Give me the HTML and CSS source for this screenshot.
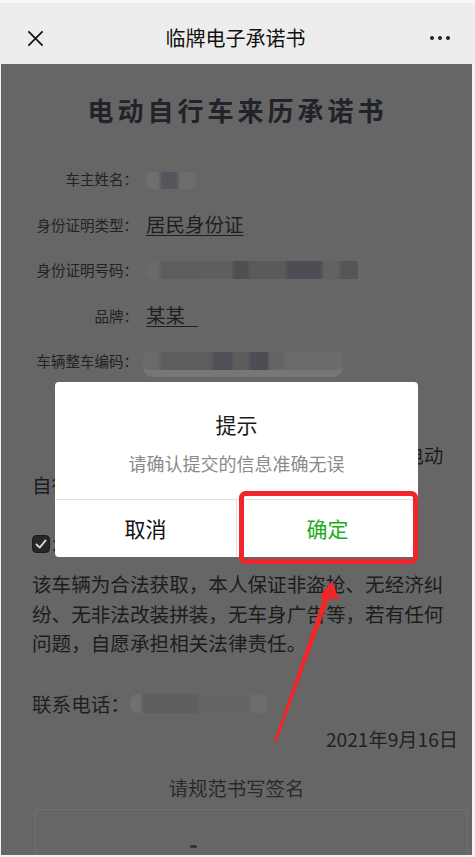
FILE: index.html
```html
<!DOCTYPE html>
<html lang="zh-CN">
<head>
    <meta charset="UTF-8">
    <meta name="viewport" content="width=device-width, initial-scale=1.0">
    <title>临牌电子承诺书</title>
    <link rel="stylesheet" href="styles.css">
</head>
<body>
    <div class="nav">
        <svg class="nav-close" viewBox="0 0 18 18"><path d="M1.5 1.5L16.5 16.5M16.5 1.5L1.5 16.5"/></svg>
        <div class="nav-title">临牌电子承诺书</div>
        <div class="nav-more"><i></i><i></i><i></i></div>
    </div>

    <div class="page">
        <h1 class="doc-title">电动自行车来历承诺书</h1>

        <div class="form">
            <div class="row">
                <span class="label">车主姓名：</span>
                <span class="blur blur-name"></span>
            </div>
            <div class="row">
                <span class="label">身份证明类型：</span>
                <span class="value">居民身份证</span>
            </div>
            <div class="row">
                <span class="label">身份证明号码：</span>
                <span class="blur blur-id"></span>
            </div>
            <div class="row">
                <span class="label">品牌：</span>
                <span class="value">某某&nbsp;&nbsp;&nbsp;</span>
            </div>
            <div class="row">
                <span class="label">车辆整车编码：</span>
                <span class="blur blur-code"></span>
            </div>
        </div>

        <p class="para para-top">本人郑重承诺，所申请临时号牌登记的电动自行车信息真实有效。</p>

        <div class="agree">
            <svg class="check" viewBox="0 0 18 18">
                <rect x="0.5" y="0.5" width="17" height="17" rx="4" fill="#262626" stroke="#1a1a1a"/>
                <path d="M4.5 9.5L7.7 12.6L13.6 5.4" fill="none" stroke="#d4d4d4" stroke-width="1.9" stroke-linecap="round" stroke-linejoin="round"/>
            </svg>
            <span>本人承诺</span>
        </div>

        <p class="para para-main">该车辆为合法获取，本人保证非盗抢、无经济纠纷、无非法改装拼装，无车身广告等，若有任何问题，自愿承担相关法律责任。</p>

        <div class="phone">
            <span>联系电话：</span>
            <span class="blur blur-phone"></span>
        </div>

        <div class="date">2021年9月16日</div>

        <div class="sign-tip">请规范书写签名</div>
        <div class="sign-box"><span class="sign-mark"></span></div>

        <div class="dialog">
            <div class="dialog-title">提示</div>
            <div class="dialog-msg">请确认提交的信息准确无误</div>
            <div class="dialog-btns">
                <div class="dialog-btn cancel">取消</div>
                <div class="dialog-btn ok">确定</div>
            </div>
        </div>
    </div>

    <!-- annotation drawn on top of the screenshot -->
    <svg class="annot" viewBox="0 0 475 857">
        <rect x="241.5" y="493.5" width="174" height="68" rx="4"/>
        <polygon points="332,581 319,597 323.6,597.2 274,741.5 276.5,742.2 329.3,598.8 339,600"/>
    </svg>
</body>
</html>
```

FILE: styles.css
```css
* {
    margin: 0;
    padding: 0;
    box-sizing: border-box;
}
body {
    position: relative;
    width: 475px;
    height: 857px;
    overflow: hidden;
    background: #f2f2f2;
    font-family: "Noto Sans CJK SC", "Noto Sans", sans-serif;
}

/* top bar */
.nav {
    height: 64px;
    padding-top: 9px;
    border-top: 3px solid #f7f7f7;
    background: #ededed;
    display: grid;
    grid-template-columns: 70px 1fr 70px;
    align-items: center;
}
.nav-close {
    width: 17px;
    height: 17px;
    justify-self: center;
    fill: none;
    stroke: #111;
    stroke-width: 1.8;
}
.nav-title {
    text-align: center;
    padding-right: 4px;
    font-size: 20px;
    line-height: 28px;
    color: #111;
}
.nav-more {
    justify-self: center;
    display: flex;
    gap: 3.5px;
}
.nav-more i {
    width: 4.5px;
    height: 4.5px;
    border-radius: 50%;
    background: #222;
}

/* page under the mask */
.page {
    position: relative;
    height: 791px;
    margin: 0 3px 0 1px;
    background: #666;
    overflow: hidden;
    color: #1f1f1f;
}
.doc-title {
    padding-top: 28px;
    text-align: center;
    text-indent: 2px;
    font-size: 26px;
    line-height: 36px;
    font-weight: 700;
    letter-spacing: 4px;
    color: #22222a;
}
.form {
    margin-top: 28px;
}
.row {
    display: flex;
    align-items: center;
    height: 45.5px;
}
.label {
    width: 137px;
    text-align: right;
    font-size: 14.5px;
    color: #222;
}
.value {
    margin-left: 8px;
    font-size: 19.5px;
    line-height: 24px;
    text-decoration: underline;
    text-underline-offset: 3px;
    text-decoration-thickness: 1px;
    color: #1f1f1f;
}
.blur {
    display: inline-block;
    border-radius: 5px;
}
.blur-name {
    margin: 3px 0 0 8px;
    width: 50px;
    height: 17px;
    background: linear-gradient(90deg, #6e6e6e 0, #6e6e6e 12px, #56555d 16px, #56555d 30px, #6c6c6c 34px, #6c6c6c 100%);
}
.blur-id {
    margin-left: 9px;
    width: 211px;
    height: 18px;
    border-radius: 6px 2px 2px 6px;
    background: linear-gradient(90deg, #6a6a6a 0, #6a6a6a 11px, #5d5d5d 15px, #5f5f5f 84px, #4f4f54 88px, #4f4f54 100px, #5a5a5a 103px, #5a5a5a 138px, #4d4d53 141px, #4d4d53 173px, #626262 177px, #626262 191px, #555 195px, #555 100%);
}
.blur-code {
    margin: 7px 0 0 5px;
    width: 200px;
    height: 25px;
    border-bottom: 7px solid #777;
    border-radius: 6px 2px 10px 10px;
    background: linear-gradient(90deg, #6a6a6a 0, #6a6a6a 15px, #5d5d5d 19px, #5d5d5d 68px, #505056 72px, #505056 88px, #5c5c5c 91px, #5c5c5c 105px, #4d4d53 108px, #4d4d53 124px, #656565 127px, #656565 140px, #6b6b6b 144px, #6b6b6b 100%);
}
.blur-phone {
    width: 137px;
    height: 19px;
    border-radius: 8px 2px 2px 8px;
    background: linear-gradient(90deg, #707070 0, #707070 10px, #5f5f5f 14px, #5f5f5f 66px, #646464 70px, #646464 118px, #6c6c6c 122px, #6c6c6c 100%);
}

.para {
    padding: 0 27px 0 31px;
    font-size: 19.6px;
    line-height: 29.5px;
    color: #1c1c1c;
}
.para-top {
    margin-top: 56.5px;
    line-height: 30px;
    text-indent: 39.2px;
}
.agree {
    display: flex;
    align-items: center;
    gap: 2px;
    margin-top: 29px;
    height: 30px;
    padding-left: 31px;
    font-size: 19.6px;
    color: #1c1c1c;
}
.check {
    display: block;
    width: 18px;
    height: 18px;
    flex: none;
}
.para-main {
    margin-top: 10px;
}
.phone {
    display: flex;
    align-items: center;
    margin-top: 31px;
    height: 30px;
    padding-left: 31px;
    font-size: 19.6px;
    color: #1f1f1f;
}
.date {
    margin-top: 5px;
    padding-right: 14px;
    text-align: right;
    font-size: 19.2px;
    line-height: 30px;
    color: #222;
}
.sign-tip {
    margin-top: 19px;
    text-align: center;
    font-size: 19.4px;
    line-height: 30px;
    color: #2a2a2a;
}
.sign-box {
    position: relative;
    margin: 6px 4px 0 34px;
    height: 100px;
    border: 1px solid #717171;
}
.sign-mark {
    position: absolute;
    left: 154px;
    top: 35px;
    width: 7px;
    height: 3px;
    border-radius: 2px;
    background: #333;
}

/* modal */
.dialog {
    position: absolute;
    top: 318px;
    left: 54px;
    width: 363px;
    height: 175px;
    background: #fff;
    border-radius: 4px;
    text-align: center;
    overflow: hidden;
}
.dialog-title {
    padding-top: 28px;
    font-size: 21px;
    line-height: 28px;
    color: #1a1a1a;
}
.dialog-msg {
    margin-top: 13px;
    font-size: 18px;
    line-height: 24px;
    color: #8a8a8a;
}
.dialog-btns {
    display: flex;
    margin-top: 24px;
    border-top: 1px solid #e2e2e2;
}
.dialog-btn {
    flex: 1;
    font-size: 21px;
    line-height: 57px;
}
.cancel {
    color: #111;
}
.ok {
    color: #1aad19;
    border-left: 1px solid #e2e2e2;
}

.annot {
    position: absolute;
    top: 0;
    left: 0;
    width: 475px;
    height: 857px;
    pointer-events: none;
}
.annot rect {
    fill: none;
    stroke: #f0262a;
    stroke-width: 5;
}
.annot polygon {
    fill: #f0262a;
}
```
